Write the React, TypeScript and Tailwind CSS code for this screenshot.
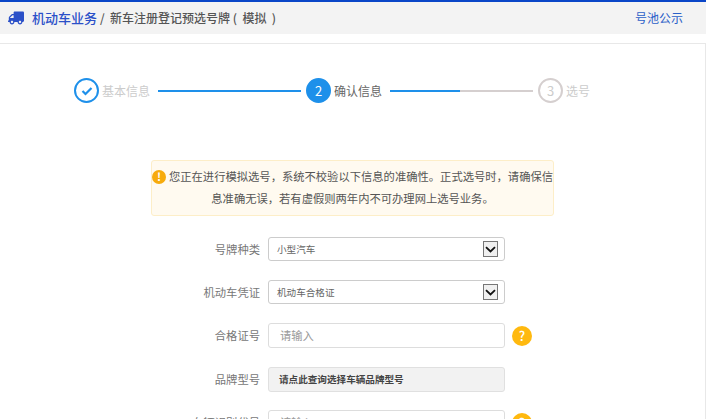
import React from "react";
import { FaTruck } from "react-icons/fa";

const font = { fontFamily: '"Noto Sans CJK SC", "Liberation Sans", sans-serif' };

function Chevron() {
  return (
    <span className="flex h-[16px] w-[15px] items-center justify-center border border-[#767676] bg-[#f0f0f0]">
      <svg width="11" height="7" viewBox="0 0 11 7">
        <path d="M1 1.2 L5.5 5.5 L10 1.2" fill="none" stroke="#111" strokeWidth="1.8" />
      </svg>
    </span>
  );
}

function Help() {
  return (
    <span className="ml-[7px] flex h-[20px] w-[20px] items-center justify-center rounded-full bg-[#ffb90f] text-[13px] font-medium text-white">?</span>
  );
}

function Row({ label, children, help, tight }: { label: string; children: React.ReactNode; help?: boolean; tight?: boolean }) {
  return (
    <div className={`flex items-center ${tight ? "mb-[18px]" : "mb-[19px]"}`}>
      <div className="w-[268px] pr-[8px] text-right text-[11.3px] text-[#777]">{label}</div>
      {children}
      {help && <Help />}
    </div>
  );
}

function Select({ value }: { value: string }) {
  return (
    <div className="flex h-[24px] w-[237px] items-center justify-between rounded-[3px] border border-[#ccc] pl-[8px] pr-[6px] text-[9.6px] text-[#666]">
      <span className="mt-[1px]">{value}</span>
      <Chevron />
    </div>
  );
}

function Input() {
  return (
    <div className="flex h-[25px] w-[237px] items-center rounded-[3px] border border-[#ddd] pl-[11px] text-[11.3px] text-[#999]">请输入</div>
  );
}

function Step({ n, label, state }: { n: React.ReactNode; label: string; state: "done" | "active" | "todo" }) {
  const circle =
    state === "done"
      ? "border-[#1e90ea] bg-white"
      : state === "active"
        ? "border-[#1e90ea] bg-[#1e90ea] text-white"
        : "border-[#d5cfcf] bg-white text-[#ccc]";
  const text = state === "active" ? "text-[#666]" : "text-[#ccc]";
  return (
    <div className="flex items-center">
      <span className={`flex h-[25px] w-[25px] items-center justify-center rounded-full border-2 text-[13px] ${circle}`}>{n}</span>
      <span className={`ml-[3px] text-[12px] ${text}`}>{label}</span>
    </div>
  );
}

export default function App() {
  return (
    <div className="h-[419px] w-[720px] overflow-hidden bg-white" style={font}>
      <div className="w-[706px]">
        <div className="h-[2px] bg-[#0a46c8]" />
        <div className="flex h-[32px] items-center justify-between bg-[#f3f3f3] pl-[8px] pr-[23px]">
          <div className="flex items-center">
            <FaTruck size={16} color="#2b50c8" className="mr-[8px] -scale-x-100" />
            <span className="text-[13px] font-medium text-[#2b50c8]">机动车业务</span>
            <span className="ml-[3px] whitespace-pre text-[12px] font-medium text-[#555]">{"/  新车注册登记预选号牌 (  模拟  )"}</span>
          </div>
          <span className="text-[12px] text-[#2b60c8]">号池公示</span>
        </div>
        <div className="mt-[9px] h-[400px] border-t border-r border-[#e8e8e8] pt-[34px]">
          <div className="flex items-center pl-[74px]">
            <Step
              state="done"
              label="基本信息"
              n={
                <svg width="12" height="10" viewBox="0 0 12 10">
                  <path d="M1.5 5 L4.5 8 L10.5 2" fill="none" stroke="#1e90ea" strokeWidth="2.2" />
                </svg>
              }
            />
            <div className="ml-[8px] mr-[5px] h-[2px] w-[143px] bg-[#1e90ea]" />
            <Step state="active" label="确认信息" n="2" />
            <div className="ml-[8px] mr-[5px] flex h-[2px] w-[143px] bg-[#d5cfcf]">
              <div className="h-full w-[70px] bg-[#1e90ea]" />
            </div>
            <Step state="todo" label="选号" n="3" />
          </div>
          <div className="ml-[151px] mt-[57px] h-[56px] w-[403px] rounded-[3px] border border-[#fdeec8] bg-[#fffaf0] text-center text-[11.3px] text-[#555]">
            <div className="mt-[4px] flex h-[22px] items-center justify-center whitespace-nowrap pt-[1px]">
              <span className="mr-[3px] flex h-[14px] w-[14px] shrink-0 items-center justify-center rounded-full bg-[#f7ab0c] text-[11px] font-bold text-white">!</span>
              您正在进行模拟选号，系统不校验以下信息的准确性。正式选号时，请确保信
            </div>
            <div className="h-[23px] leading-[23px]">息准确无误，若有虚假则两年内不可办理网上选号业务。</div>
          </div>
          <div className="mt-[21px]">
            <Row label="号牌种类"><Select value="小型汽车" /></Row>
            <Row label="机动车凭证"><Select value="机动车合格证" /></Row>
            <Row label="合格证号" help><Input /></Row>
            <Row label="品牌型号" tight>
              <div className="flex h-[25px] w-[237px] items-center rounded-[3px] border border-[#e0e0e0] bg-[#f2f2f2] pl-[10px] text-[9.6px] font-bold text-[#444]">请点此查询选择车辆品牌型号</div>
            </Row>
            <Row label="车辆识别代号" help><Input /></Row>
          </div>
        </div>
      </div>
    </div>
  );
}
